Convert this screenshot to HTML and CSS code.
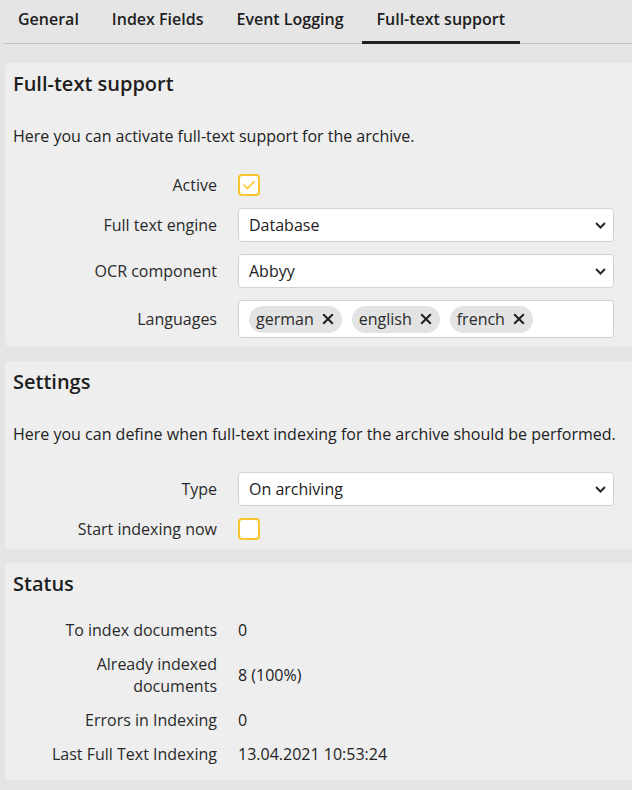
FILE: index.html
```html
<!DOCTYPE html>
<html>
<head>
    <title>Full-text support</title>
    <link rel="stylesheet" href="styles.css">
</head>
<body>
    <div id="tabBar">
        <button class="tab">General</button>
        <button class="tab">Index Fields</button>
        <button class="tab">Event Logging</button>
        <button class="tab active">Full-text support</button>
    </div>

    <div id="content">
        <section class="panel">
            <h2>Full-text support</h2>
            <p class="intro">Here you can activate full-text support for the archive.</p>
            <div class="rows">
                <label class="rowLabel">Active</label>
                <div class="rowValue">
                    <span class="check">
                        <svg width="14" height="10" viewBox="0 0 14 10"><path d="M1.5 4.5 L5.5 8.3 L12.5 1.2" fill="none" stroke="#fcc62f" stroke-width="1.6"/></svg>
                    </span>
                </div>

                <label class="rowLabel">Full text engine</label>
                <div class="rowValue">
                    <div class="select">
                        <span>Database</span>
                        <svg width="11" height="7" viewBox="0 0 11 7"><path d="M1 1 L5.5 5.5 L10 1" fill="none" stroke="#2a2a2a" stroke-width="2"/></svg>
                    </div>
                </div>

                <label class="rowLabel">OCR component</label>
                <div class="rowValue">
                    <div class="select">
                        <span>Abbyy</span>
                        <svg width="11" height="7" viewBox="0 0 11 7"><path d="M1 1 L5.5 5.5 L10 1" fill="none" stroke="#2a2a2a" stroke-width="2"/></svg>
                    </div>
                </div>

                <label class="rowLabel">Languages</label>
                <div class="rowValue">
                    <div class="tagInput">
                        <span class="chip">german <svg width="12" height="12" viewBox="0 0 12 12"><path d="M1.2 1.2 L10.8 10.8 M10.8 1.2 L1.2 10.8" stroke="#1e1e1e" stroke-width="2"/></svg></span>
                        <span class="chip">english <svg width="12" height="12" viewBox="0 0 12 12"><path d="M1.2 1.2 L10.8 10.8 M10.8 1.2 L1.2 10.8" stroke="#1e1e1e" stroke-width="2"/></svg></span>
                        <span class="chip">french <svg width="12" height="12" viewBox="0 0 12 12"><path d="M1.2 1.2 L10.8 10.8 M10.8 1.2 L1.2 10.8" stroke="#1e1e1e" stroke-width="2"/></svg></span>
                    </div>
                </div>
            </div>
        </section>

        <section class="panel">
            <h2>Settings</h2>
            <p class="intro">Here you can define when full-text indexing for the archive should be performed.</p>
            <div class="rows">
                <label class="rowLabel">Type</label>
                <div class="rowValue">
                    <div class="select">
                        <span>On archiving</span>
                        <svg width="11" height="7" viewBox="0 0 11 7"><path d="M1 1 L5.5 5.5 L10 1" fill="none" stroke="#2a2a2a" stroke-width="2"/></svg>
                    </div>
                </div>

                <label class="rowLabel">Start indexing now</label>
                <div class="rowValue">
                    <span class="check"></span>
                </div>
            </div>
        </section>

        <section class="panel status">
            <h2>Status</h2>
            <div class="rows">
                <label class="rowLabel">To index documents</label>
                <div class="rowValue">0</div>

                <label class="rowLabel">Already indexed documents</label>
                <div class="rowValue">8 (100%)</div>

                <label class="rowLabel">Errors in Indexing</label>
                <div class="rowValue">0</div>

                <label class="rowLabel">Last Full Text Indexing</label>
                <div class="rowValue">13.04.2021 10:53:24</div>
            </div>
        </section>
    </div>
</body>
</html>
```

FILE: styles.css
```css
body {
    margin: 0;
    background-color: #e5e5e5;
    font-family: "Open Sans", "Liberation Sans", sans-serif;
    font-size: 16px;
    line-height: 22px;
    color: #222;
    overflow-x: hidden;
}

#tabBar {
    display: flex;
    gap: 3px;
    height: 43px;
    margin-left: 3px;
    border-bottom: 1px solid #c4c4c4;
}

    #tabBar .tab {
        font-family: inherit;
        font-size: 16px;
        font-weight: 600;
        color: #1e1e1e;
        background-color: transparent;
        border: none;
        border-bottom: 3px solid transparent;
        margin-bottom: -1px;
        padding: 0 15px 4px 15px;
        cursor: pointer;
    }

        #tabBar .tab.active {
            border-bottom-color: #222;
        }

#content {
    margin: 19px -10px 0 5px;
    display: flex;
    flex-direction: column;
    gap: 14px;
}

.panel {
    background-color: #eeeeee;
    border-radius: 5px;
    padding: 7px 28px 9px 8px;
}

    .panel h2 {
        margin: 0;
        font-size: 20px;
        font-weight: 600;
        line-height: 27px;
        color: #1e1e1e;
    }

    .panel.status {
        padding-bottom: 15px;
    }

        .panel.status .rows {
            margin-top: 22px;
        }

.intro {
    margin: 28px 0 27px 0;
    white-space: nowrap;
}

.rows {
    display: grid;
    grid-template-columns: 204px 1fr;
    column-gap: 21px;
    row-gap: 12px;
    align-items: center;
}

.rowLabel {
    text-align: right;
    padding-left: 24px;
    color: #2a2a2a;
}

.rowValue {
    display: flex;
    align-items: center;
}

.check {
    display: flex;
    align-items: center;
    justify-content: center;
    box-sizing: border-box;
    width: 22px;
    height: 22px;
    border: 2px solid #fcc62f;
    border-radius: 4px;
    background-color: #fff;
}

.select {
    box-sizing: border-box;
    width: 100%;
    height: 34px;
    display: flex;
    align-items: center;
    justify-content: space-between;
    padding: 0 7px 0 10px;
    background-color: #fff;
    border: 1px solid #d3d3d3;
    border-radius: 4px;
}

.tagInput {
    box-sizing: border-box;
    width: 100%;
    height: 38px;
    display: flex;
    align-items: center;
    gap: 10px;
    padding: 0 10px;
    background-color: #fff;
    border: 1px solid #d3d3d3;
    border-radius: 4px;
}

.chip {
    display: flex;
    align-items: center;
    gap: 8px;
    height: 27px;
    padding: 0 8px 0 7px;
    background-color: #e3e3e3;
    border-radius: 14px;
    color: #2a2a2a;
}
```
